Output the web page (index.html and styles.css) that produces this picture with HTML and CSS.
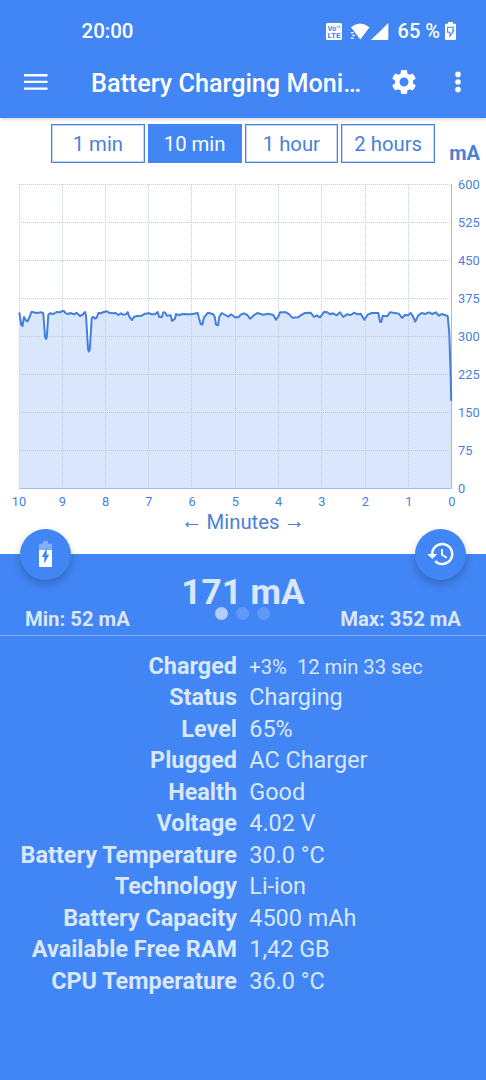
FILE: index.html
```html
<!DOCTYPE html>
<html lang="en">
<head>
    <meta charset="UTF-8">
    <meta name="viewport" content="width=device-width, initial-scale=1.0">
    <title>Battery Charging Monitor</title>
    <link rel="stylesheet" href="styles.css">
</head>
<body>
    <header class="header">
        <div class="status-bar">
            <span class="clock">20:00</span>
            <div class="status-icons">
                <svg class="icon-volte" width="16" height="17" viewBox="0 0 16 17">
                    <rect width="16" height="17" rx="1.5" fill="#fff"/>
                    <text x="1.4" y="7.6" class="volte-text">Vo</text>
                    <path d="M10.6 4.5q1-2.6 1.9 0M13.6 5V2.4" fill="none" stroke="#4285f4" stroke-width=".8"/>
                    <text x="1.4" y="14.8" class="volte-text" textLength="13.2" lengthAdjust="spacingAndGlyphs">LTE</text>
                </svg>
                <svg class="icon-wifi" width="20" height="17" viewBox="0 0 20 17" fill="#fff">
                    <path d="M1 4.2Q10-3 19.5 4.2L10.3 16.4z"/>
                    <path d="M.8 9h2.4l.8 1.3H.8zM2.2 11.8h2l.9 1.3H2.2zM.8 14.4h3v1.3h-3z"/>
                </svg>
                <svg class="icon-signal" width="18" height="17" viewBox="0 0 18 17">
                    <path d="M17.3 0v16q0 1-1 1H0z" fill="#fff"/>
                </svg>
                <span class="percent">65 %</span>
                <svg class="icon-battery" width="11" height="18" viewBox="0 0 11 18">
                    <path d="M3 0h5v1.8h2q1 0 1 1V17q0 1-1 1H1q-1 0-1-1V2.8q0-1 1-1h2z" fill="#fff"/>
                    <path d="M2.6 5.2h5.8L7.8 8.6h1L5 14.2v-4H2.6z" fill="#fff" stroke="#4285f4" stroke-width="1.1"/>
                </svg>
            </div>
        </div>
        <div class="toolbar">
            <svg class="icon-menu" width="24" height="16" viewBox="0 0 24 16" fill="#fff">
                <path d="M0 0h23.5v2.4H0zM0 6.7h23.5v2.4H0zM0 13.4h23.5v2.4H0z"/>
            </svg>
            <h1 class="title">Battery Charging Moni…</h1>
            <svg class="icon-settings" width="30" height="30" viewBox="0 0 24 24" fill="#fff">
                <path d="M19.14 12.94c.04-.3.06-.61.06-.94 0-.32-.02-.64-.07-.94l2.03-1.58c.18-.14.23-.41.12-.61l-1.92-3.32c-.12-.22-.37-.29-.59-.22l-2.39.96c-.5-.38-1.03-.7-1.62-.94l-.36-2.54c-.04-.24-.24-.41-.48-.41h-3.84c-.24 0-.43.17-.47.41l-.36 2.54c-.59.24-1.13.57-1.62.94l-2.39-.96c-.22-.08-.47 0-.59.22L2.74 8.87c-.12.21-.08.47.12.61l2.03 1.58c-.05.3-.09.63-.09.94s.02.64.07.94l-2.03 1.58c-.18.14-.23.41-.12.61l1.92 3.32c.12.22.37.29.59.22l2.39-.96c.5.38 1.03.7 1.62.94l.36 2.54c.05.24.24.41.48.41h3.84c.24 0 .44-.17.47-.41l.36-2.54c.59-.24 1.13-.56 1.62-.94l2.39.96c.22.08.47 0 .59-.22l1.92-3.32c.12-.22.07-.47-.12-.61l-2.01-1.58zM12 15.6c-1.98 0-3.6-1.62-3.6-3.6s1.62-3.6 3.6-3.6 3.6 1.62 3.6 3.6-1.62 3.6-3.6 3.6z"/>
            </svg>
            <svg class="icon-more" width="6" height="22" viewBox="0 0 6 22" fill="#fff">
                <circle cx="3" cy="3.4" r="2.8"/>
                <circle cx="3" cy="11" r="2.8"/>
                <circle cx="3" cy="18.6" r="2.8"/>
            </svg>
        </div>
    </header>

    <main>
        <section class="chart-panel">
            <div class="tabs-row">
                <div class="tabs">
                    <button class="tab">1 min</button>
                    <button class="tab active">10 min</button>
                    <button class="tab">1 hour</button>
                    <button class="tab">2 hours</button>
                </div>
                <span class="unit">mA</span>
            </div>

            <svg class="chart" width="486" height="346" viewBox="0 164 486 346">
                <path class="area" d="M19.3 312.5L21.3 325 22.5 326 24 317 26 320.5 27.5 321.5 30 316 31.5 311.8 36.5 313 41.5 312.3 43.3 313.3 45 336.5 46 339 46.8 337 48.3 315 50 313.3 53.5 314 56.5 312 60 312.3 62.5 310.8 64 311 65.5 313.3 68.5 314 70.5 313 74 314.3 76.5 312.8 80 316 82.3 315 85 312 86 315 88 348.5 88.7 351.5 89.8 350 91.7 318.3 93.3 316.7 95 318.7 96.7 317.7 98.3 313 100.7 313.3 103.3 312.3 106.7 311.3 109 312.7 113.3 313.3 115.7 313 118.3 315 121 313.3 123.3 314.7 126 314.3 127.7 312 129.3 316.7 132 320 134 316.7 137.3 316 141.7 315.7 145 313.7 149 313.3 151.7 314.3 155 314.3 157.7 312 159 316.7 161.7 317.3 163.3 312.3 165.3 312.7 166.7 315.7 170.7 315.3 172 321 175 318.7 176 314 179 315.3 182.3 314 191.7 314.3 197.7 313 199 318.3 200.7 324 202.3 324.7 204 317.3 208 312.7 213.3 314.3 214.7 316.7 216 324.7 218 325.3 219.3 316.7 221.7 313 228.3 316.7 231 314.3 235 317.3 238.3 317.3 240.7 314.7 244 313.3 247.3 315 250 318.7 253.3 315.7 257.3 313 263.3 314.7 268.3 313.7 273.3 315 276 319.7 278.3 316.7 280 312.3 286 312.3 289.3 314.3 292.3 317.7 298.3 317.3 300.7 315.3 305 313 310.7 312.7 314 317 316.7 315.3 320 317.3 324 312 327.3 312.3 330 314.3 333 313.3 336.7 315.3 340 312.3 343.3 317 346.7 314.3 350.7 315 354.3 312.7 357.3 314.3 360.7 313.7 364.3 319.7 367.7 314.7 371.7 313 378.3 313 380 321.7 381.3 322 382.7 315.7 387.3 316.3 390 312.3 399 313.7 402 318 405 315 408 315.3 410.7 313 412.3 315 415.3 321.7 418.3 315.3 421.7 313 425 314 429 312.3 432.3 314 435.7 312.3 439 315.7 441.7 314 447.7 316 449.3 333 450.7 376.7 451.2 401V488H19.3z"/>
                <g class="grid">
                    <path d="M19 184.5H451M19 222.5H451M19 260.5H451M19 298.5H451M19 336.5H451M19 374.5H451M19 412.5H451M19 450.5H451"/>
                    <path d="M19.5 184V488M62.5 184V488M105.5 184V488M148.5 184V488M191.5 184V488M235.5 184V488M278.5 184V488M321.5 184V488M365.5 184V488M408.5 184V488"/>
                </g>
                <path class="axis" d="M19 488.5H451.5V184"/>
                <path class="line" d="M19.3 312.5L21.3 325 22.5 326 24 317 26 320.5 27.5 321.5 30 316 31.5 311.8 36.5 313 41.5 312.3 43.3 313.3 45 336.5 46 339 46.8 337 48.3 315 50 313.3 53.5 314 56.5 312 60 312.3 62.5 310.8 64 311 65.5 313.3 68.5 314 70.5 313 74 314.3 76.5 312.8 80 316 82.3 315 85 312 86 315 88 348.5 88.7 351.5 89.8 350 91.7 318.3 93.3 316.7 95 318.7 96.7 317.7 98.3 313 100.7 313.3 103.3 312.3 106.7 311.3 109 312.7 113.3 313.3 115.7 313 118.3 315 121 313.3 123.3 314.7 126 314.3 127.7 312 129.3 316.7 132 320 134 316.7 137.3 316 141.7 315.7 145 313.7 149 313.3 151.7 314.3 155 314.3 157.7 312 159 316.7 161.7 317.3 163.3 312.3 165.3 312.7 166.7 315.7 170.7 315.3 172 321 175 318.7 176 314 179 315.3 182.3 314 191.7 314.3 197.7 313 199 318.3 200.7 324 202.3 324.7 204 317.3 208 312.7 213.3 314.3 214.7 316.7 216 324.7 218 325.3 219.3 316.7 221.7 313 228.3 316.7 231 314.3 235 317.3 238.3 317.3 240.7 314.7 244 313.3 247.3 315 250 318.7 253.3 315.7 257.3 313 263.3 314.7 268.3 313.7 273.3 315 276 319.7 278.3 316.7 280 312.3 286 312.3 289.3 314.3 292.3 317.7 298.3 317.3 300.7 315.3 305 313 310.7 312.7 314 317 316.7 315.3 320 317.3 324 312 327.3 312.3 330 314.3 333 313.3 336.7 315.3 340 312.3 343.3 317 346.7 314.3 350.7 315 354.3 312.7 357.3 314.3 360.7 313.7 364.3 319.7 367.7 314.7 371.7 313 378.3 313 380 321.7 381.3 322 382.7 315.7 387.3 316.3 390 312.3 399 313.7 402 318 405 315 408 315.3 410.7 313 412.3 315 415.3 321.7 418.3 315.3 421.7 313 425 314 429 312.3 432.3 314 435.7 312.3 439 315.7 441.7 314 447.7 316 449.3 333 450.7 376.7 451.2 401"/>
                <g class="labels">
                    <text x="458" y="189">600</text>
                    <text x="458" y="227">525</text>
                    <text x="458" y="265">450</text>
                    <text x="458" y="303">375</text>
                    <text x="458" y="341">300</text>
                    <text x="458" y="379">225</text>
                    <text x="458" y="417">150</text>
                    <text x="458" y="455">75</text>
                    <text x="458" y="493">0</text>
                </g>
                <g class="labels labels-x">
                    <text x="19" y="505.5">10</text>
                    <text x="62.3" y="505.5">9</text>
                    <text x="105.6" y="505.5">8</text>
                    <text x="148.9" y="505.5">7</text>
                    <text x="192.1" y="505.5">6</text>
                    <text x="235.4" y="505.5">5</text>
                    <text x="278.5" y="505.5">4</text>
                    <text x="321.9" y="505.5">3</text>
                    <text x="365.3" y="505.5">2</text>
                    <text x="408.8" y="505.5">1</text>
                    <text x="451.8" y="505.5">0</text>
                </g>
            </svg>

            <div class="axis-title">
                <svg width="13" height="7" viewBox="0 0 13 7"><path d="M13 3.5H1M3.7 1.3L1 3.5l2.7 2.2"/></svg>
                <span>Minutes</span>
                <svg width="13" height="7" viewBox="0 0 13 7"><path d="M0 3.5h12M9.3 1.3L12 3.5 9.3 5.7"/></svg>
            </div>
        </section>

        <section class="current">
            <button class="fab fab-left">
                <svg width="13" height="26" viewBox="0 0 13 26">
                    <path d="M4 0h5v2.7h3q1 0 1 1V9H0V3.7q0-1 1-1h3z" fill="#84affa"/>
                    <path d="M0 9h13v16q0 1-1 1H1q-1 0-1-1z" fill="#fff"/>
                    <path d="M7.7 6.8v7h2.5L5.3 22.5v-6.4H2.8z" fill="#4285f4"/>
                </svg>
            </button>
            <button class="fab fab-right">
                <svg width="30" height="30" viewBox="0 0 24 24" fill="#fff">
                    <path d="M13 3c-4.97 0-9 4.03-9 9H1l3.89 3.89.07.14L9 12H6c0-3.87 3.13-7 7-7s7 3.13 7 7-3.13 7-7 7c-1.93 0-3.68-.79-4.94-2.06l-1.42 1.42C8.27 19.99 10.51 21 13 21c4.97 0 9-4.03 9-9s-4.03-9-9-9zm-1 5v5l4.28 2.54.72-1.21-3.5-2.08V8H12z"/>
                </svg>
            </button>
            <div class="current-value">171 mA</div>
            <div class="dots">
                <span class="dot selected"></span>
                <span class="dot"></span>
                <span class="dot"></span>
            </div>
            <div class="min-max">
                <span>Min: 52 mA</span>
                <span>Max: 352 mA</span>
            </div>
        </section>

        <section class="info">
            <span class="name">Charged</span><span class="value small">+3%&nbsp; 12 min 33 sec</span>
            <span class="name">Status</span><span class="value">Charging</span>
            <span class="name">Level</span><span class="value">65%</span>
            <span class="name">Plugged</span><span class="value">AC Charger</span>
            <span class="name">Health</span><span class="value">Good</span>
            <span class="name">Voltage</span><span class="value">4.02 V</span>
            <span class="name">Battery Temperature</span><span class="value">30.0 °C</span>
            <span class="name">Technology</span><span class="value">Li-ion</span>
            <span class="name">Battery Capacity</span><span class="value">4500 mAh</span>
            <span class="name">Available Free RAM</span><span class="value">1,42 GB</span>
            <span class="name">CPU Temperature</span><span class="value">36.0 °C</span>
        </section>
    </main>
</body>
</html>
```
FILE: styles.css
```css
* {
    box-sizing: border-box;
}

body {
    margin: 0;
    width: 486px;
    height: 1080px;
    overflow: hidden;
    background: #4285f4;
    color: #fff;
    font-family: Roboto, "Liberation Sans", sans-serif;
}

svg {
    display: block;
    flex-shrink: 0;
}

button {
    font-family: inherit;
    padding: 0;
    margin: 0;
}

/* header */
.header {
    position: relative;
    z-index: 1;
    height: 118px;
    background: #4285f4;
    box-shadow: 0 1px 4px rgba(0, 0, 0, 0.2);
}

.status-bar {
    display: flex;
    justify-content: space-between;
    align-items: center;
    height: 48px;
    padding: 14px 30px 0 81.5px;
}

.clock {
    font-size: 20.5px;
    font-weight: 500;
}

.status-icons {
    display: flex;
    align-items: center;
}

.volte-text {
    font-size: 7.4px;
    font-weight: 700;
    fill: #4285f4;
}

.icon-wifi {
    margin-left: 8px;
}

.icon-signal {
    margin-left: 1px;
}

.percent {
    margin: 0 5px 0 9px;
    font-size: 20px;
    font-weight: 500;
    white-space: nowrap;
}

.toolbar {
    display: flex;
    align-items: center;
    height: 69px;
    padding: 0 25px 0 24px;
}

.icon-menu {
    margin-top: -2px;
}

.title {
    flex: 1;
    margin: 2px 0 0 43px;
    font-size: 25.2px;
    font-weight: 500;
    white-space: nowrap;
}

.icon-settings {
    margin-top: -2px;
}

.icon-more {
    margin: -1px 0 0 36px;
}

/* chart */
.chart-panel {
    height: 436px;
    background: #fff;
    color: #4a80d9;
}

.tabs-row {
    display: flex;
    justify-content: space-between;
    height: 46px;
    padding: 6px 6px 0 51px;
}

.tabs {
    display: flex;
    gap: 3px;
}

.tab {
    width: 93.75px;
    height: 39px;
    border: 1px solid #4a80d9;
    outline: 1px solid #c2d5f5;
    outline-offset: -2px;
    background: #fff;
    color: #4a80d9;
    font-size: 20.3px;
}

.tab.active {
    background: #4285f4;
    border-color: #4285f4;
    outline: none;
    color: #fff;
}

.unit {
    margin-top: 17px;
    font-size: 20px;
    line-height: 24px;
    font-weight: 700;
}

.area {
    fill: #d9e6fc;
}

.grid path {
    fill: none;
    stroke: #b4c4d4;
    stroke-width: 1;
    stroke-dasharray: 1 1;
    opacity: 0.8;
}

.axis {
    fill: none;
    stroke: #9dbbed;
    stroke-width: 1;
}

.line {
    fill: none;
    stroke: #437fdc;
    stroke-width: 2;
    stroke-linejoin: round;
}

.labels {
    fill: #4a80d9;
    font-size: 12.8px;
}

.labels-x {
    text-anchor: middle;
}

.axis-title {
    display: flex;
    justify-content: center;
    align-items: center;
    gap: 9px;
    height: 24px;
    font-size: 20.3px;
}

.axis-title svg {
    margin-top: 5px;
    fill: none;
    stroke: #4a80d9;
    stroke-width: 1.1;
}

/* current reading */
.current {
    position: relative;
    height: 82px;
    border-bottom: 1px solid #84affa;
    color: #d9e7fd;
    font-weight: 700;
}

.fab {
    position: absolute;
    top: -25px;
    display: flex;
    justify-content: center;
    align-items: center;
    width: 51px;
    height: 51px;
    padding-bottom: 2px;
    border: none;
    border-radius: 50%;
    background: #4285f4;
    box-shadow: 0 4px 8px rgba(0, 0, 0, 0.22);
}

.fab-left {
    left: 20px;
}

.fab-right {
    right: 20px;
}

.current-value {
    padding-top: 18px;
    font-size: 35.2px;
    line-height: 41px;
    text-align: center;
}

.dots {
    position: absolute;
    top: 53px;
    left: 215px;
    display: flex;
    gap: 8px;
}

.dot {
    width: 13px;
    height: 13px;
    border-radius: 50%;
    background: #6199f7;
}

.dot.selected {
    background: #b3cefb;
}

.min-max {
    display: flex;
    justify-content: space-between;
    margin-top: -6px;
    padding: 0 25px;
    font-size: 20.3px;
    line-height: 24px;
}

/* battery details */
.info {
    display: grid;
    grid-template-columns: 237px 1fr;
    column-gap: 12.3px;
    grid-auto-rows: 31.53px;
    padding-top: 14.5px;
    color: #d9e7fd;
    font-size: 23.4px;
    line-height: 31.5px;
    white-space: nowrap;
}

.name {
    font-weight: 700;
    text-align: right;
}

.value.small {
    font-size: 20.2px;
    line-height: 33px;
}
```
